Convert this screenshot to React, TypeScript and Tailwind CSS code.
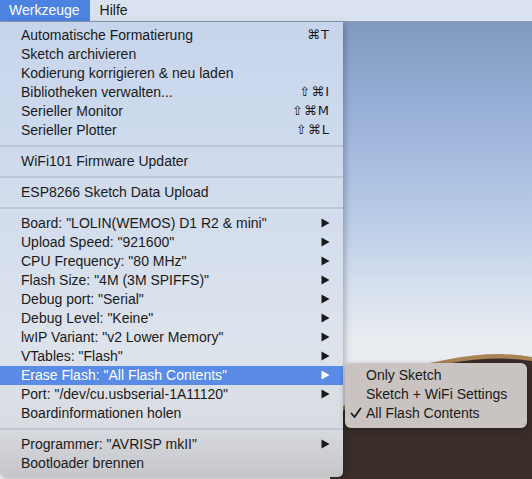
import React from 'react'

type Item =
  | { kind: 'item'; label: string; shortcut?: string; submenu?: boolean; active?: boolean }
  | { kind: 'sep' }

const items: Item[] = [
  { kind: 'item', label: 'Automatische Formatierung', shortcut: '⌘T' },
  { kind: 'item', label: 'Sketch archivieren' },
  { kind: 'item', label: 'Kodierung korrigieren & neu laden' },
  { kind: 'item', label: 'Bibliotheken verwalten...', shortcut: '⇧⌘I' },
  { kind: 'item', label: 'Serieller Monitor', shortcut: '⇧⌘M' },
  { kind: 'item', label: 'Serieller Plotter', shortcut: '⇧⌘L' },
  { kind: 'sep' },
  { kind: 'item', label: 'WiFi101 Firmware Updater' },
  { kind: 'sep' },
  { kind: 'item', label: 'ESP8266 Sketch Data Upload' },
  { kind: 'sep' },
  { kind: 'item', label: 'Board: "LOLIN(WEMOS) D1 R2 & mini"', submenu: true },
  { kind: 'item', label: 'Upload Speed: "921600"', submenu: true },
  { kind: 'item', label: 'CPU Frequency: "80 MHz"', submenu: true },
  { kind: 'item', label: 'Flash Size: "4M (3M SPIFFS)"', submenu: true },
  { kind: 'item', label: 'Debug port: "Serial"', submenu: true },
  { kind: 'item', label: 'Debug Level: "Keine"', submenu: true },
  { kind: 'item', label: 'lwIP Variant: "v2 Lower Memory"', submenu: true },
  { kind: 'item', label: 'VTables: "Flash"', submenu: true },
  { kind: 'item', label: 'Erase Flash: "All Flash Contents"', submenu: true, active: true },
  { kind: 'item', label: 'Port: "/dev/cu.usbserial-1A11120"', submenu: true },
  { kind: 'item', label: 'Boardinformationen holen' },
  { kind: 'sep' },
  { kind: 'item', label: 'Programmer: "AVRISP mkII"', submenu: true },
  { kind: 'item', label: 'Bootloader brennen' },
]

const Arrow = ({ white }: { white?: boolean }) => (
  <svg width="9" height="10" viewBox="0 0 9 10" className="shrink-0">
    <path d="M0.5 0.5 L8.5 5 L0.5 9.5 Z" fill={white ? '#ffffff' : '#1a1a1a'} />
  </svg>
)

const Check = () => (
  <svg width="12" height="12" viewBox="0 0 12 12" className="shrink-0">
    <path d="M1.5 6.5 L4.5 10 L10.5 1.5" fill="none" stroke="#1a1a1a" strokeWidth="1.8" strokeLinecap="round" strokeLinejoin="round" />
  </svg>
)

export default function App() {
  return (
    <div
      className="relative w-[532px] h-[479px] overflow-hidden bg-[linear-gradient(to_bottom,#7c93b9_0px,#99b0d8_110px,#b3c6e4_200px,#d3deee_280px,#e9ecf0_340px,#eceef0_479px)]"
      style={{ fontFamily: '"Liberation Sans", "DejaVu Sans", sans-serif' }}
    >
      {/* desktop hill */}
      <svg className="absolute left-0 top-0" width="532" height="479" viewBox="0 0 532 479">
        <path d="M330 420 Q 370 372 445 360 Q 495 350 532 357 L532 479 L330 479 Z" fill="#a98454" />
        <path d="M330 424 Q 372 376 446 364 Q 495 355 532 361 L532 479 L330 479 Z" fill="#3a2e2a" />
      </svg>

      {/* menu bar */}
      <div className="relative flex h-[22px] items-center bg-[#d9e2ee] text-[14px] text-[#1a1a1a] border-b border-[#8f9bb0]">
        <div className="flex h-full items-center bg-[#4c82e0] pl-[9px] pr-[10px] text-white">Werkzeuge</div>
        <div className="pl-[10px]">Hilfe</div>
      </div>

      {/* dropdown */}
      <div className="absolute left-0 top-[22px] w-[343px] h-[455px] rounded-b-[5px] pt-[3.5px] pb-[4.5px] bg-[linear-gradient(to_bottom,#c7d5ec_0%,#d3dded_45%,#dde3ec_70%,#d9dce2_88%,#c6c6ca_100%)] shadow-[2px_2px_6px_rgba(0,0,0,0.25)] text-[14px] text-[#1a1a1a]">
        {items.map((it, i) =>
          it.kind === 'sep' ? (
            <div key={i} className="flex h-[12px] items-center">
              <div className="h-[2px] w-full bg-[#bcc6d4]" />
            </div>
          ) : (
            <div
              key={i}
              className={`flex h-[19px] items-center pl-[21px] pr-[13px] ${it.active ? 'bg-[#5a8be6] text-white' : ''}`}
            >
              <span className="flex-1 whitespace-nowrap">{it.label}</span>
              {it.shortcut && (
                <span className="tracking-[1px]" style={{ fontFamily: '"DejaVu Sans", sans-serif', fontSize: '13px' }}>
                  {it.shortcut}
                </span>
              )}
              {it.submenu && <Arrow white={it.active} />}
            </div>
          )
        )}
      </div>

      {/* submenu */}
      <div className="absolute left-[345px] top-[363px] w-[182px] h-[65px] rounded-[6px] bg-[#c9c4c1] shadow-[0_2px_6px_rgba(0,0,0,0.3)] pt-[2.5px] text-[14px] text-[#1a1a1a]">
        <div className="flex h-[19px] items-center pl-[21px]">Only Sketch</div>
        <div className="flex h-[19px] items-center pl-[21px]">Sketch + WiFi Settings</div>
        <div className="flex h-[19px] items-center">
          <div className="flex w-[21px] pl-[5px]">
            <Check />
          </div>
          <span>All Flash Contents</span>
        </div>
      </div>
    </div>
  )
}
